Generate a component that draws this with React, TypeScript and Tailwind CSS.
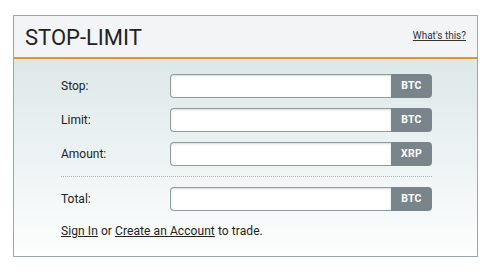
import React from "react";

function Row({ label, unit }: { label: string; unit: string }) {
  return (
    <div className="flex items-center h-[24px]">
      <div className="w-[109px] text-[12px] text-[#222]">{label}</div>
      <div className="flex h-[24px] w-[262px]">
        <input
          className="flex-1 min-w-0 h-full bg-white border border-[#8f9c9e] rounded-l-[4px] border-r-0 shadow-[inset_0_1px_2px_rgba(0,0,0,0.15)] outline-none"
          type="text"
        />
        <div className="w-[41px] h-full bg-[#7a858b] rounded-r-[4px] flex items-center justify-center text-white text-[10.5px] font-bold tracking-[0.2px]">
          {unit}
        </div>
      </div>
    </div>
  );
}

export default function App() {
  return (
    <div className="w-[494px] h-[275px] bg-white pt-[15px] pl-[13px] font-['Roboto',sans-serif]">
      <div className="w-[465px] h-[242px] border border-[#9aa7a8] flex flex-col">
        <div className="h-[41px] bg-[#f2f4f5] flex items-center justify-between pl-[11px] pr-[11px] border-b-2 border-[#e0952f] box-content">
          <div className="text-[22px] text-[#222] leading-none mt-[2px]">STOP-LIMIT</div>
          <a className="text-[10px] text-[#333] underline mt-[-2px]" href="#">What's this?</a>
        </div>
        <div className="flex-1 bg-gradient-to-b from-[#dde8e9] to-[#fdfefe] pl-[47px] pr-[45px] pt-[15px]">
          <div className="flex flex-col gap-[10px]">
            <Row label="Stop:" unit="BTC" />
            <Row label="Limit:" unit="BTC" />
            <Row label="Amount:" unit="XRP" />
          </div>
          <div className="mt-[10px] border-t border-dotted border-[#a9b3b4] w-[371px]" />
          <div className="mt-[10px]">
            <Row label="Total:" unit="BTC" />
          </div>
          <div className="mt-[12px] text-[12px] tracking-[0.08px] text-[#222] leading-[16px]">
            <a href="#" className="underline">Sign In</a> or{" "}
            <a href="#" className="underline">Create an Account</a> to trade.
          </div>
        </div>
      </div>
    </div>
  );
}
